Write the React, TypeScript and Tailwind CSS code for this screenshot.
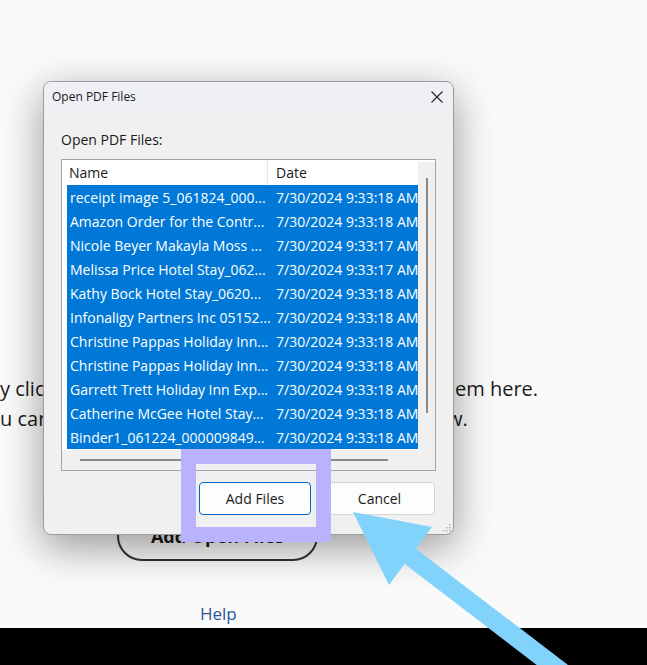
const files = [
  { name: "receipt image 5_061824_000...", date: "7/30/2024 9:33:18 AM" },
  { name: "Amazon Order for the Contr...", date: "7/30/2024 9:33:18 AM" },
  { name: "Nicole Beyer Makayla Moss ...", date: "7/30/2024 9:33:17 AM" },
  { name: "Melissa Price Hotel Stay_062...", date: "7/30/2024 9:33:17 AM" },
  { name: "Kathy Bock Hotel Stay_0620...", date: "7/30/2024 9:33:18 AM" },
  { name: "Infonaligy Partners Inc 05152...", date: "7/30/2024 9:33:18 AM" },
  { name: "Christine Pappas Holiday Inn...", date: "7/30/2024 9:33:18 AM" },
  { name: "Christine Pappas Holiday Inn...", date: "7/30/2024 9:33:18 AM" },
  { name: "Garrett Trett Holiday Inn Exp...", date: "7/30/2024 9:33:18 AM" },
  { name: "Catherine McGee Hotel Stay...", date: "7/30/2024 9:33:18 AM" },
  { name: "Binder1_061224_000009849...", date: "7/30/2024 9:33:18 AM" },
];

function FileList() {
  return (
    <div className="flex h-[312px] w-[375px] flex-col border border-[#a3a3a3] bg-white">
      <div className="flex h-[290px]">
        <div className="w-[356px] pl-[5px]">
          <div className="flex h-[25px] items-center text-[14px] text-[#1a1a1a]">
            <div className="flex h-full w-[201px] items-center border-r border-[#e5e5e5] pl-[2px]">Name</div>
            <div className="pl-[8px]">Date</div>
          </div>
          {files.map((f, i) => (
            <div
              key={i}
              className="flex h-[24px] w-[351px] items-center overflow-hidden whitespace-nowrap bg-[#0078d7] text-[14px] text-white"
            >
              <div className="w-[206px] shrink-0 overflow-hidden pl-[3px]">{f.name}</div>
              <div className="shrink-0 pl-[3px]">{f.date}</div>
            </div>
          ))}
        </div>
        <div className="mt-[2px] flex w-[17px] justify-center bg-[#f0f0f0] pt-[16px]">
          <div className="h-[235px] w-[2px] bg-[#8a8a8a]" />
        </div>
      </div>
      <div className="flex flex-1 items-center bg-[#f0f0f0] pl-[18px]">
        <div className="h-[2px] w-[308px] bg-[#8a8a8a]" />
      </div>
    </div>
  );
}

function Dialog() {
  return (
    <div className="absolute left-[43px] top-[81px] flex h-[454px] w-[411px] flex-col rounded-[8px] border border-[#9c9c9c] bg-[#f0f0f0] shadow-[0_12px_42px_rgba(0,0,0,0.4)]">
      <div className="flex h-[29px] items-center justify-between rounded-t-[8px] bg-[#eff0f4] pl-[8px] pr-[9px] text-[12px] text-[#1a1a1a]">
        <span>Open PDF Files</span>
        <svg width="12" height="12" viewBox="0 0 12 12" className="mr-[1px]">
          <path d="M0.5 0.5 L11.5 11.5 M11.5 0.5 L0.5 11.5" stroke="#222" strokeWidth="1.1" fill="none" />
        </svg>
      </div>
      <div className="flex flex-1 flex-col pl-[17px] pr-[18px]">
        <div className="mt-[19px] h-[20px] text-[14px] leading-[20px] text-[#1a1a1a]">Open PDF Files:</div>
        <div className="mt-[9px]">
          <FileList />
        </div>
        <div className="mt-[11px] flex justify-end gap-[13px]">
          <button
            type="button"
            className="h-[33px] w-[112px] rounded-[4px] border border-[#0067c0] bg-[#fdfdfd] text-[14px] text-[#1a1a1a]"
          >
            Add Files
          </button>
          <button
            type="button"
            className="h-[33px] w-[111px] rounded-[4px] border border-[#d5d5d5] bg-[#fdfdfd] text-[14px] text-[#1a1a1a]"
          >
            Cancel
          </button>
        </div>
      </div>
      <svg className="absolute bottom-[2px] right-[2px]" width="9" height="9" viewBox="0 0 9 9">
        <rect x="7" y="1" width="1.5" height="1.5" fill="#b0b0b0" />
        <rect x="4" y="4" width="1.5" height="1.5" fill="#b0b0b0" />
        <rect x="7" y="4" width="1.5" height="1.5" fill="#b0b0b0" />
        <rect x="1" y="7" width="1.5" height="1.5" fill="#b0b0b0" />
        <rect x="4" y="7" width="1.5" height="1.5" fill="#b0b0b0" />
        <rect x="7" y="7" width="1.5" height="1.5" fill="#b0b0b0" />
      </svg>
    </div>
  );
}

export default function App() {
  return (
    <div className="relative flex h-[665px] w-[647px] flex-col overflow-hidden bg-[#fafafa] font-['Open_Sans','Noto_Sans',sans-serif]">
      <div className="whitespace-nowrap pt-[374px] text-[20px] leading-[30px] text-[#1b1b1b]">
        <div className="flex">
          <span className="w-[455px] shrink-0">y clic</span>
          <span>em here.</span>
        </div>
        <div className="flex">
          <span className="w-[447px] shrink-0">u can</span>
          <span>w.</span>
        </div>
      </div>

      <button
        type="button"
        className="ml-[117px] mt-[77px] h-[50px] w-[201px] rounded-full border-2 border-[#333] text-[18px] font-bold text-[#1b1b1b]"
      >
        Add Open Files
      </button>

      <a className="ml-[200px] mt-[41px] text-[17px] leading-[24px] text-[#2a5699]">Help</a>

      <div className="mt-auto h-[37px] bg-black" />

      <Dialog />

      <div className="absolute left-[181px] top-[449px] h-[93px] w-[150px] border-[15px] border-[#b9b2fd]" />

      <svg className="pointer-events-none absolute left-0 top-0" width="647" height="665" viewBox="0 0 647 665">
        <line x1="402" y1="550" x2="572" y2="680" stroke="#82d3fc" strokeWidth="19" />
        <polygon points="353,512 432,527 389,585" fill="#82d3fc" />
      </svg>
    </div>
  );
}
